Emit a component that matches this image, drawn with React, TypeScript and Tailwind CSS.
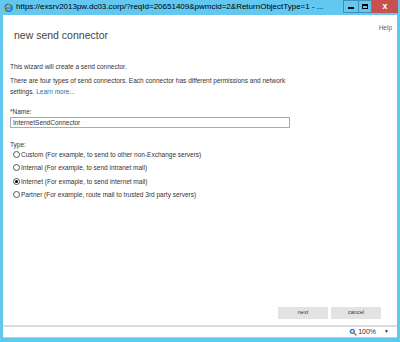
import { useState } from "react"

const types = [
  { id: "custom", label: "Custom (For example, to send to other non-Exchange servers)" },
  { id: "internal", label: "Internal (For example, to send intranet mail)" },
  { id: "internet", label: "Internet (For exmaple, to send internet mail)" },
  { id: "partner", label: "Partner (For example, route mail to trusted 3rd party servers)" },
]

function IeIcon() {
  return (
    <svg width="11" height="11" viewBox="0 0 16 16">
      <circle cx="8" cy="8.5" r="5" fill="none" stroke="#1a73c8" strokeWidth="2.4" />
      <rect x="4" y="8" width="9" height="1.6" fill="#1a73c8" />
      <path d="M2 13 C0 9, 8 2, 15 2" fill="none" stroke="#f2b01e" strokeWidth="1.4" />
    </svg>
  )
}

export default function App() {
  const [selected, setSelected] = useState("internet")
  const [name, setName] = useState("InternetSendConnector")

  return (
    <div className="w-[400px] h-[342px] bg-[#62c8f0] flex flex-col overflow-hidden font-['Liberation_Sans',sans-serif]">
      {/* title bar */}
      <div className="h-[15px] flex items-start shrink-0">
        <div className="pl-[3px] pt-[2px]">
          <IeIcon />
        </div>
        <p className="ml-[2px] mt-[1px] text-[8px] leading-[12px] text-black whitespace-nowrap">
          https://exsrv2013pw.dc03.corp/?reqId=20651409&amp;pwmcid=2&amp;ReturnObjectType=1 - ...
        </p>
        <div className="ml-auto flex h-[13px] mr-[2px]">
          <div className="w-[15px] h-full border border-[#3d8fb8] border-r-0 flex items-center justify-center">
            <div className="w-[6px] h-[2px] bg-black mt-[3px]" />
          </div>
          <div className="w-[14px] h-full border border-[#3d8fb8] flex items-center justify-center">
            <div className="w-[6px] h-[5px] border border-black border-t-2" />
          </div>
          <div className="w-[26px] h-full bg-[#c75050] flex items-center justify-center text-white text-[9px] font-bold leading-none">
            x
          </div>
        </div>
      </div>

      {/* page */}
      <div className="flex-1 mx-[3px] bg-white flex flex-col text-[#333333]">
        <div className="flex justify-between pl-[11px] pr-[5px]">
          <h1 className="mt-[13px] text-[10.5px] leading-[14px] text-[#444]">new send connector</h1>
          <span className="mt-[8px] text-[6.5px] text-[#666]">Help</span>
        </div>

        <div className="pl-[7px] mt-[19px] text-[6.5px] leading-[11px]">
          <p>This wizard will create a send connector.</p>
          <p className="mt-[3px]">
            There are four types of send connectors. Each connector has different permissions and network
          </p>
          <div className="flex gap-[2px]">
            <span>settings.</span>
            <span className="text-[#1e6fb3]">Learn more...</span>
          </div>

          <p className="mt-[9px]">*Name:</p>
          <input
            value={name}
            onChange={(e) => setName(e.target.value)}
            className="block w-[280px] h-[11px] border border-[#aaaaaa] px-[2px] text-[6.5px] text-[#333] outline-none"
          />

          <p className="mt-[11px]">Type:</p>
          <div className="flex flex-col pl-[3px] -mt-[2px]">
            {types.map((t) => (
              <label key={t.id} className="flex items-center h-[13.3px] gap-[1px]">
                <span
                  onClick={() => setSelected(t.id)}
                  className="w-[7px] h-[7px] rounded-full border border-[#555] flex items-center justify-center"
                >
                  {selected === t.id && <span className="w-[3px] h-[3px] rounded-full bg-black" />}
                </span>
                <span>{t.label}</span>
              </label>
            ))}
          </div>
        </div>

        <div className="mt-auto mb-[6px] flex justify-end gap-[3px] pr-[16px]">
          <button className="w-[50px] h-[12px] bg-[#e3e3e3] text-[5.5px] text-[#333] leading-none">next</button>
          <button className="w-[50px] h-[12px] bg-[#e3e3e3] text-[5.5px] text-[#333] leading-none">cancel</button>
        </div>
      </div>

      {/* status bar */}
      <div className="h-[13px] mx-[3px] bg-white border-t-2 border-[#dddddd] border-b border-b-[#c8c8c8] flex items-center justify-end pr-[8px] shrink-0">
        <svg width="8" height="8" viewBox="0 0 8 8">
          <circle cx="3.3" cy="3.3" r="2.6" fill="#3b7fd0" />
          <path d="M2 3.3 h2.6 M3.3 2 v2.6" stroke="white" strokeWidth="0.9" />
          <path d="M5 5 L7.5 7.5" stroke="#b07a20" strokeWidth="1.4" />
        </svg>
        <span className="ml-[1px] text-[7px] text-[#333]">100%</span>
        <span className="ml-[8px] text-[5px] text-[#333]">▼</span>
      </div>
      <div className="h-[4px] shrink-0" />
    </div>
  )
}
